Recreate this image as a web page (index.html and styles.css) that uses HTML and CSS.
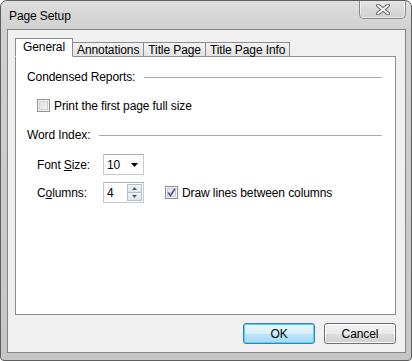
FILE: index.html
```html
<!DOCTYPE html>
<html>
<head>
<meta charset="utf-8">
<link rel="stylesheet" href="styles.css">
</head>
<body>
<div class="window">
  <div class="titlebar">
    <span class="title">Page Setup</span>
    <div class="close">
      <svg width="16" height="11" viewBox="0 0 16 11">
        <path d="M3 1.5 L13 9.5 M13 1.5 L3 9.5" stroke="#6d6d6d" stroke-width="4" stroke-linecap="round" fill="none"/>
        <path d="M3 1.5 L13 9.5 M13 1.5 L3 9.5" stroke="#f4f4f4" stroke-width="2" stroke-linecap="round" fill="none"/>
      </svg>
    </div>
  </div>
  <div class="client">
    <div class="tabs">
      <div class="tab selected">General</div>
      <div class="tab">Annotations</div>
      <div class="tab">Title Page</div>
      <div class="tab">Title Page Info</div>
    </div>
    <div class="panel">
      <div class="group-head"><span>Condensed Reports:</span><div class="rule"></div></div>
      <div class="check-row first">
        <span class="checkbox"></span>
        <span>Print the first page full size</span>
      </div>
      <div class="group-head second"><span>Word Index:</span><div class="rule"></div></div>
      <div class="field-row fontsize">
        <span class="label">Font <u>S</u>ize:</span>
        <div class="combo">
          <span>10</span>
          <svg width="7" height="4" viewBox="0 0 7 4"><path d="M0 0 H7 L3.5 4 Z" fill="#000"/></svg>
        </div>
      </div>
      <div class="field-row columns">
        <span class="label">C<u>o</u>lumns:</span>
        <div class="spin">
          <span>4</span>
          <div class="spin-btns">
            <div class="sb up"><svg width="5" height="3" viewBox="0 0 5 3"><path d="M0 3 H5 L2.5 0 Z" fill="#4d6185"/></svg></div>
            <div class="sb down"><svg width="5" height="3" viewBox="0 0 5 3"><path d="M0 0 H5 L2.5 3 Z" fill="#4d6185"/></svg></div>
          </div>
        </div>
        <div class="check-inline">
          <span class="checkbox checked">
            <svg width="9" height="9" viewBox="0 0 9 9"><path d="M1 4.5 L3.5 7.5 L8 0.8" stroke="#4c5f8f" stroke-width="1.8" fill="none"/></svg>
          </span>
          <span>Draw lines between columns</span>
        </div>
      </div>
    </div>
    <div class="buttons">
      <div class="btn default">OK</div>
      <div class="btn">Cancel</div>
    </div>
  </div>
</div>
</body>
</html>
```
FILE: styles.css
```css
html, body {
  margin: 0;
  padding: 0;
  background: #ffffff;
}
body {
  font-family: "Liberation Sans", Arial, sans-serif;
  font-size: 12px;
  letter-spacing: -0.1px;
  color: #000;
}
.window {
  width: 412px;
  height: 361px;
  box-sizing: border-box;
  border: 1px solid #5e5e5e;
  border-radius: 7px 7px 4px 4px;
  background: linear-gradient(to bottom, #dedede 0px, #d0d0d0 30px, #c6c6c6 100%);
  display: flex;
  flex-direction: column;
  overflow: hidden;
}
.titlebar {
  height: 28px;
  display: flex;
  align-items: flex-start;
  flex-shrink: 0;
}
.title {
  margin-left: 8px;
  margin-top: 8px;
  font-size: 12px;
  line-height: 14px;
  color: #000;
}
.close {
  margin-left: auto;
  margin-right: 5px;
  margin-top: -1px;
  width: 47px;
  height: 19px;
  box-sizing: border-box;
  border: 1px solid #8a8a8a;
  border-top: none;
  border-radius: 0 0 5px 5px;
  background: linear-gradient(to bottom, #e6e6e6, #d0d0d0);
  box-shadow: inset 0 0 0 1px rgba(255,255,255,0.5);
  display: flex;
  align-items: center;
  justify-content: center;
}
.client {
  flex: 1;
  margin: 0 5px 7px 6px;
  border: 1px solid #848484;
  background: #f0f0f0;
  display: flex;
  flex-direction: column;
  padding: 8px 9px 8px 7px;
}
.tabs {
  display: flex;
  align-items: flex-end;
  height: 19px;
  margin-bottom: -1px;
  position: relative;
  z-index: 1;
}
.tab {
  height: 15px;
  box-sizing: border-box;
  border: 1px solid #898c95;
  background: linear-gradient(to bottom, #f2f2f2, #e3e3e3);
  padding: 0 4px;
  line-height: 15px;
  margin-left: -1px;
  white-space: nowrap;
}
.tab.selected {
  margin-left: 0;
  height: 19px;
  background: #fff;
  border-bottom-color: #fff;
  padding: 0 7px 0 7px;
  line-height: 16px;
  position: relative;
  z-index: 2;
}
.panel {
  flex: 1;
  background: #fff;
  border: 1px solid #898c95;
  padding: 13px 13px 0 11px;
  display: flex;
  flex-direction: column;
}
.group-head {
  display: flex;
  align-items: center;
  height: 15px;
  line-height: 15px;
}
.group-head.second {
  margin-top: 15px;
}
.rule {
  flex: 1;
  height: 1px;
  background: #a9a9a9;
  margin-left: 9px;
}
.check-row {
  display: flex;
  align-items: center;
  height: 15px;
  margin-left: 10px;
  margin-top: 13px;
}
.checkbox {
  width: 13px;
  height: 13px;
  box-sizing: border-box;
  border: 1px solid #8f8f8f;
  background: linear-gradient(135deg, #dcdcdc, #f6f6f6);
  box-shadow: inset 0 0 0 1px #f4f4f4, inset 0 0 0 2px #cfcfcf;
  margin-right: 4px;
  display: flex;
  align-items: center;
  justify-content: center;
  flex-shrink: 0;
}
.checkbox.checked {
  background: linear-gradient(135deg, #e0e0e0, #f8f8f8);
}
.field-row {
  display: flex;
  align-items: center;
  margin-left: 10px;
  height: 21px;
}
.field-row.fontsize {
  margin-top: 11px;
}
.field-row.columns {
  margin-top: 7px;
}
.label {
  width: 66px;
}
.combo, .spin {
  width: 41px;
  height: 21px;
  box-sizing: border-box;
  border: 1px solid #c6c9cf;
  border-top-color: #abadb3;
  background: #fff;
  display: flex;
  align-items: center;
  padding-left: 3px;
}
.combo span, .spin span {
  flex: 1;
}
.combo svg {
  margin-right: 5px;
}
.spin-btns {
  display: flex;
  flex-direction: column;
  width: 15px;
  height: 17px;
  margin-right: 1px;
}
.sb {
  flex: 1;
  box-sizing: border-box;
  border: 1px solid #b5bfcb;
  background: linear-gradient(to bottom, #f3f5f8, #dfe5ec);
  display: flex;
  align-items: center;
  justify-content: center;
}
.sb.down {
  border-top: none;
}
.check-inline {
  display: flex;
  align-items: center;
  margin-left: 21px;
}
.buttons {
  display: flex;
  justify-content: flex-end;
  gap: 9px;
  margin-top: 8px;
  height: 21px;
}
.btn {
  width: 72px;
  height: 21px;
  box-sizing: border-box;
  border: 1px solid #707070;
  border-radius: 3px;
  background: linear-gradient(to bottom, #f2f2f2 0%, #ebebeb 50%, #dddddd 51%, #cfcfcf 100%);
  box-shadow: inset 0 0 0 1px #fcfcfc;
  display: flex;
  align-items: center;
  justify-content: center;
}
.btn.default {
  border-color: #3c7fb1;
  background: linear-gradient(to bottom, #eaf6fd 0%, #d9f0fc 50%, #bee6fd 51%, #a7d9f5 100%);
  box-shadow: inset 0 0 0 1px #48d7fb;
}
u {
  text-decoration: underline;
  text-underline-offset: 1px;
}
```
